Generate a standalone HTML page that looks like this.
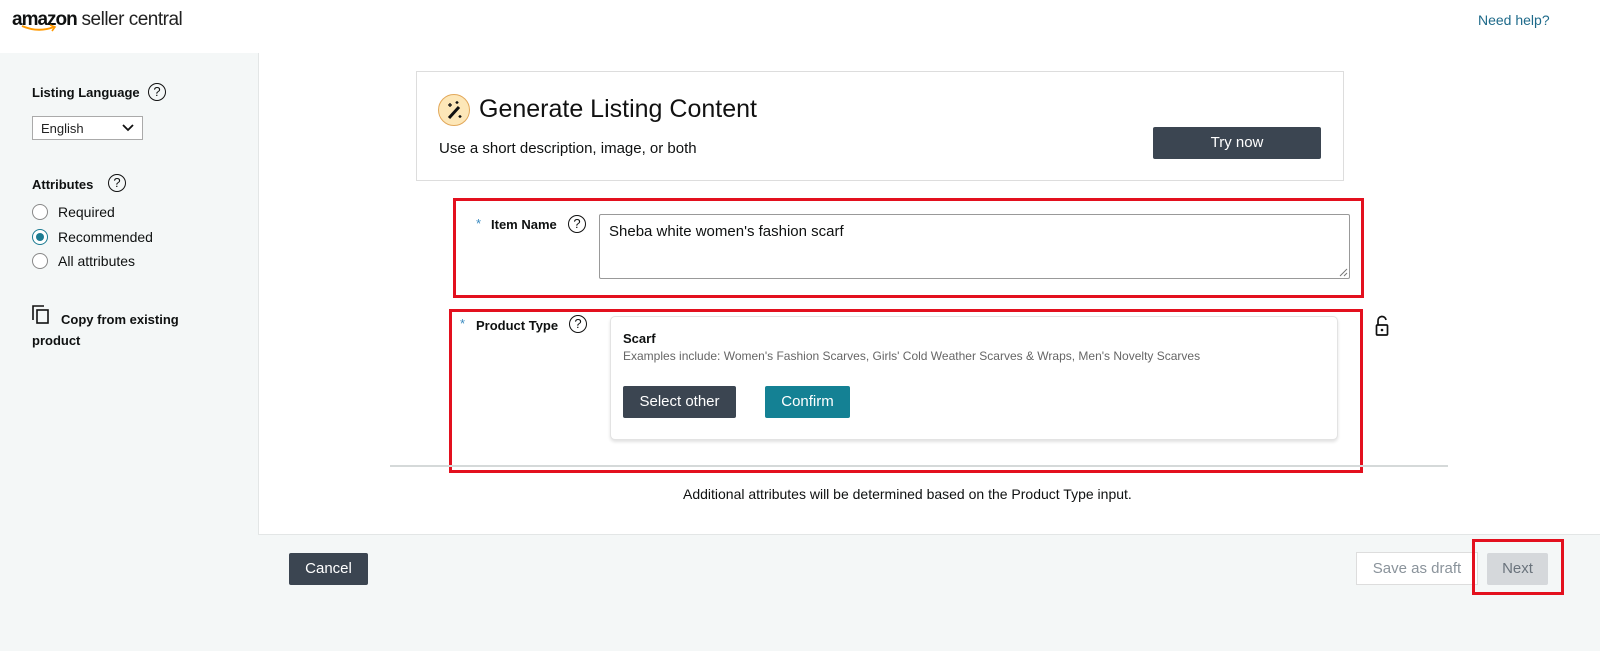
<!DOCTYPE html>
<html><head><meta charset="utf-8"><style>
*{box-sizing:border-box;margin:0;padding:0}
body{width:1600px;height:651px;position:relative;background:#f4f7f7;font-family:"Liberation Sans",Arial,sans-serif;color:#0f1111;overflow:hidden}
.a{position:absolute}
.b{font-weight:bold}
.q{position:absolute;width:18px;height:18px;border:1.5px solid #111;border-radius:50%;font-size:13px;text-align:center;line-height:15px;font-weight:normal}
.radio{position:absolute;width:16px;height:16px;border:1px solid #888;border-radius:50%;background:#fff}
.red{position:absolute;border:3px solid #e3101e}
.btn{position:absolute;color:#fff;font-size:15px;text-align:center;border-radius:2px}
</style></head><body>
<div class="a" style="left:0;top:0;width:1600px;height:53px;background:#fff"></div>
<div class="a" style="left:12px;top:9px;font-size:19px;letter-spacing:-0.5px"><span class="b" style="letter-spacing:-1px">amazon</span> <span style="color:#222">seller central</span></div>
<svg class="a" style="left:20px;top:24px" width="40" height="10"><path d="M2 2 Q18 9 34 3" stroke="#f90" stroke-width="2" fill="none"/><path d="M30 1 L35 3 L32 7" stroke="#f90" stroke-width="1.6" fill="none"/></svg>
<div class="a" style="left:1478px;top:12px;font-size:14px;color:#1e6a8a">Need help?</div>

<div class="a b" style="left:32px;top:85px;font-size:13px">Listing Language</div>
<div class="q" style="left:148px;top:83px">?</div>
<div class="a" style="left:32px;top:116px;width:111px;height:24px;border:1px solid #aaa;background:#fff;font-size:13px;padding:4px 8px;color:#222">English</div>
<svg class="a" style="left:122px;top:124px" width="12" height="8"><path d="M1 1 L6 6 L11 1" stroke="#111" stroke-width="1.8" fill="none"/></svg>
<div class="a b" style="left:32px;top:177px;font-size:13px">Attributes</div>
<div class="q" style="left:108px;top:174px">?</div>
<div class="radio" style="left:32px;top:204px"></div><div class="a" style="left:58px;top:204px;font-size:14px">Required</div>
<div class="radio" style="left:32px;top:229px;border-color:#1d7c92"><div style="width:8px;height:8px;margin:3px;border-radius:50%;background:#1d7c92"></div></div><div class="a" style="left:58px;top:229px;font-size:14px">Recommended</div>
<div class="radio" style="left:32px;top:253px"></div><div class="a" style="left:58px;top:253px;font-size:14px">All attributes</div>
<svg class="a" style="left:32px;top:305px" width="18" height="20"><path d="M1 15 V1 H12" stroke="#111" stroke-width="1.6" fill="none"/><rect x="5" y="5" width="11" height="13" stroke="#111" stroke-width="1.6" fill="none"/></svg>
<div class="a b" style="left:32px;top:309px;font-size:13px;line-height:21px;width:170px;text-indent:29px">Copy from existing product</div>

<div class="a" style="left:258px;top:53px;width:1342px;height:482px;background:#fff;border-left:1px solid #e3e6e6;border-bottom:1px solid #e3e6e6"></div>
<div class="a" style="left:416px;top:71px;width:928px;height:110px;border:1px solid #ddd;background:#fff"></div>
<div class="a" style="left:438px;top:94px;width:32px;height:32px;border-radius:50%;background:#fde7b8;border:1px solid #e2a85a"></div>
<svg class="a" style="left:438px;top:94px" width="32" height="32"><path d="M11 24 L21 13" stroke="#111" stroke-width="3"/><path d="M12 9 v4 M10 11 h4 M22 21 v3 M20.5 22.5 h3 M19 7 v3 M17.5 8.5 h3" stroke="#111" stroke-width="1.3"/></svg>
<div class="a" style="left:479px;top:95px;font-size:25px;color:#111">Generate Listing Content</div>
<div class="a" style="left:439px;top:140px;font-size:15px">Use a short description, image, or both</div>
<div class="btn" style="left:1153px;top:127px;width:168px;height:32px;background:#3b4551;line-height:32px">Try now</div>

<div class="red" style="left:453px;top:198px;width:911px;height:100px"></div>
<div class="a" style="left:476px;top:216px;color:#3a8ac0;font-size:13px">*</div>
<div class="a b" style="left:491px;top:217px;font-size:13px">Item Name</div>
<div class="q" style="left:568px;top:215px">?</div>
<div class="a" style="left:599px;top:214px;width:751px;height:65px;border:1px solid #999;border-radius:2px;font-size:15px;padding:8px 9px">Sheba white women's fashion scarf</div>
<svg class="a" style="left:1339px;top:268px" width="9" height="9"><path d="M1 8 L8 1 M5 8 L8 5" stroke="#777"/></svg>

<div class="red" style="left:449px;top:309px;width:914px;height:164px"></div>
<div class="a" style="left:460px;top:316px;color:#3a8ac0;font-size:13px">*</div>
<div class="a b" style="left:476px;top:318px;font-size:13px">Product Type</div>
<div class="q" style="left:569px;top:315px">?</div>
<div class="a" style="left:610px;top:316px;width:728px;height:124px;border:1px solid #e3e3e3;border-radius:5px;background:#fff;box-shadow:0 2px 3px rgba(0,0,0,.12)"></div>
<div class="a b" style="left:623px;top:331px;font-size:13px">Scarf</div>
<div class="a" style="left:623px;top:349px;font-size:12px;color:#666">Examples include: Women's Fashion Scarves, Girls' Cold Weather Scarves &amp; Wraps, Men's Novelty Scarves</div>
<div class="btn" style="left:623px;top:386px;width:113px;height:32px;background:#3b4551;line-height:32px">Select other</div>
<div class="btn" style="left:765px;top:386px;width:85px;height:32px;background:#148194;line-height:32px">Confirm</div>
<svg class="a" style="left:1373px;top:315px" width="18" height="22"><path d="M5 10 V6 a4 4 0 0 1 8 -1" stroke="#111" stroke-width="1.7" fill="none"/><rect x="3.5" y="10" width="11" height="10" stroke="#111" stroke-width="1.7" fill="none" rx="1"/><circle cx="9" cy="15" r="1.3" fill="#111"/></svg>
<div class="a" style="left:390px;top:465px;width:1058px;height:2px;background:#d5d9d9"></div>
<div class="a" style="left:683px;top:486px;font-size:14px">Additional attributes will be determined based on the Product Type input.</div>

<div class="btn" style="left:289px;top:553px;width:79px;height:32px;background:#3b4551;line-height:32px">Cancel</div>
<div class="a" style="left:1356px;top:552px;width:122px;height:33px;border:1px solid #ddd;background:#fff;color:#8a939b;font-size:15px;text-align:center;line-height:31px">Save as draft</div>
<div class="a" style="left:1487px;top:553px;width:61px;height:32px;background:#d5d8db;border-radius:2px;color:#6a737c;font-size:15px;text-align:center;line-height:32px">Next</div>
<div class="red" style="left:1472px;top:539px;width:92px;height:56px"></div>
</body></html>
